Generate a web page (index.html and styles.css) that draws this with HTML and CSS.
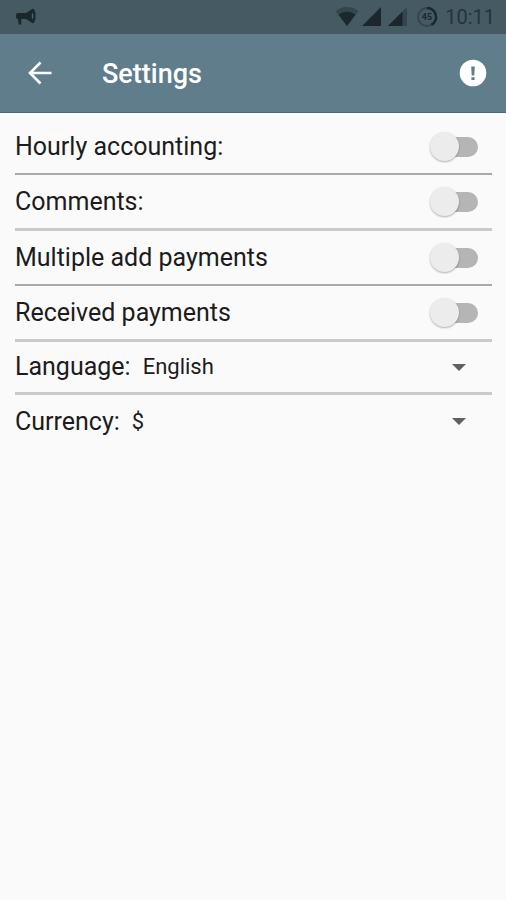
FILE: index.html
```html
<!DOCTYPE html>
<html lang="en">
<head>
    <meta charset="UTF-8">
    <meta name="viewport" content="width=device-width, initial-scale=1.0">
    <title>Settings</title>
    <link rel="stylesheet" href="styles.css">
</head>
<body>
    <div class="status-bar">
        <svg class="megaphone" width="22" height="18" viewBox="0 0 22 18">
            <path d="M1 7 Q1 5 3 5 L11 5 L11 11 L6.3 11 L6.3 16.5 L3.6 16.5 L3 11 Q1 11 1 9 Z"/>
            <path d="M11 5 L18 0.5 Q21 3 20.5 8 Q21 13 18 15.5 L11 11 Z"/>
            <path class="horn" d="M17.3 4.5 Q19.5 8 17.3 11.5 Q16 8 17.3 4.5 Z"/>
        </svg>
        <div class="status-icons">
            <svg width="24" height="20" viewBox="0 0 24 20">
                <path class="dim" d="M0.5 4 Q12 -4.5 23.5 4 L12 19 Z"/>
                <path d="M3.5 7.5 Q12 1.8 20.5 7.5 L12 19 Z"/>
            </svg>
            <svg class="signal" width="20" height="20" viewBox="0 0 20 20">
                <path d="M0 19 L19 0 V19 Z"/>
            </svg>
            <svg class="signal-two" width="20" height="20" viewBox="0 0 20 20">
                <path class="dim" d="M0 19 L19 0 V19 Z"/>
                <path d="M0 19 L14.5 4.5 V19 Z"/>
            </svg>
            <svg class="battery" width="22" height="22" viewBox="0 0 22 22">
                <circle class="ring-dim" cx="11" cy="11" r="9"/>
                <path class="ring" d="M11 2 A9 9 0 0 1 15.5 18.8"/>
                <text x="11" y="14" text-anchor="middle">45</text>
            </svg>
            <span class="clock">10:11</span>
        </div>
    </div>

    <header>
        <svg class="back" width="24" height="24" viewBox="0 0 24 24">
            <path d="M12.5 1.5 L2 12 L12.5 22.5 M2 12 H23.5"/>
        </svg>
        <h1>Settings</h1>
        <svg class="info" width="28" height="28" viewBox="0 0 28 28">
            <circle cx="14" cy="14" r="13.3"/>
            <path d="M12.2 7.5 H15.8 L15.3 16.5 H12.7 Z M12.4 18.3 H15.6 V21 H12.4 Z"/>
        </svg>
    </header>

    <main>
        <div class="row line-dark">
            <span class="label">Hourly accounting:</span>
            <span class="switch"><span class="thumb"></span></span>
        </div>
        <div class="row">
            <span class="label">Comments:</span>
            <span class="switch"><span class="thumb"></span></span>
        </div>
        <div class="row line-dark">
            <span class="label">Multiple add payments</span>
            <span class="switch"><span class="thumb"></span></span>
        </div>
        <div class="row">
            <span class="label">Received payments</span>
            <span class="switch"><span class="thumb"></span></span>
        </div>
        <div class="row select-row">
            <span class="label">Language:</span>
            <span class="value">English</span>
            <span class="arrow"></span>
        </div>
        <div class="row select-row">
            <span class="label">Currency:</span>
            <span class="value">$</span>
            <span class="arrow"></span>
        </div>
    </main>
</body>
</html>
```
FILE: styles.css
```css
* {
    box-sizing: border-box;
}
body {
    margin: 0;
    min-height: 900px;
    font-family: Roboto, sans-serif;
    color: #1c1c1c;
    background-color: #fafafa;
}
svg {
    display: block;
    flex: none;
}
.status-bar {
    display: flex;
    justify-content: space-between;
    align-items: center;
    height: 34px;
    padding: 0 11px 0 15px;
    background-color: #465a64;
    fill: #1c272d;
}
.megaphone .horn {
    fill: #52656e;
}
.status-icons {
    display: flex;
    align-items: center;
}
.dim {
    fill: #34454e;
}
.signal {
    margin-left: 3px;
}
.signal-two {
    margin-left: 6px;
}
.battery {
    margin-left: 8px;
}
.ring-dim, .ring {
    fill: none;
    stroke: #34454e;
    stroke-width: 2;
}
.ring {
    stroke: #1c272d;
    stroke-width: 2.5;
}
.battery text {
    font-size: 9px;
    font-weight: 700;
}
.clock {
    margin-left: 7px;
    font-size: 20px;
    line-height: 34px;
    color: #26333a;
}
header {
    display: flex;
    align-items: center;
    height: 79px;
    padding: 0 19px 0 28px;
    background-color: #607d8b;
    border-bottom: 1px solid #4d6774;
}
.back path {
    fill: none;
    stroke: #fff;
    stroke-width: 2.6;
}
h1 {
    margin: 2px auto 0 50px;
    font-size: 27px;
    font-weight: 500;
    line-height: 32px;
    color: #fff;
}
.info circle {
    fill: #fff;
}
.info path {
    fill: #607d8b;
}
main {
    padding: 7px 14px 0 15px;
}
.row {
    display: flex;
    align-items: center;
    height: 56px;
    padding-right: 14px;
    border-bottom: 3px solid #cacaca;
}
.line-dark {
    height: 55px;
    border-bottom: 2px solid #aaa;
}
.select-row {
    height: 53px;
}
.row:last-child {
    border-bottom: none;
}
.label {
    font-size: 25px;
    line-height: 30px;
}
.value {
    margin-left: 12px;
    font-size: 22px;
    line-height: 30px;
}
.switch {
    width: 42px;
    height: 20px;
    margin-left: auto;
    border-radius: 10px;
    background-color: #b5b5b5;
}
.thumb {
    display: block;
    width: 29px;
    height: 29px;
    margin: -5px 0 0 -6px;
    border-radius: 50%;
    background-color: #ececec;
    box-shadow: 0 1px 2px rgba(0, 0, 0, 0.3);
}
.arrow {
    margin: 0 12px 0 auto;
    border: 7px solid transparent;
    border-top-color: #616161;
    border-bottom: none;
}
```
